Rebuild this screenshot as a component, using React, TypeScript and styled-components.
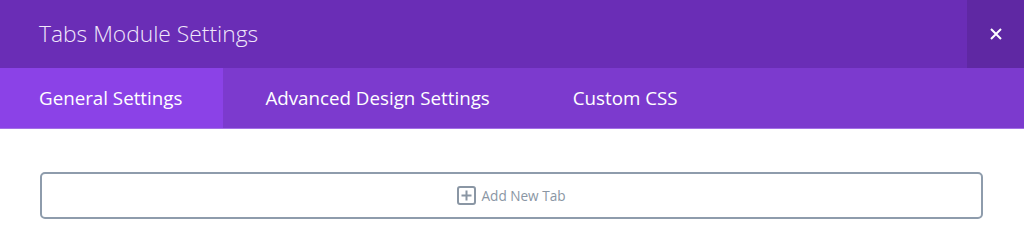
import styled, { createGlobalStyle } from 'styled-components';

const GlobalStyle = createGlobalStyle`
    html, body {
        margin: 0;
        padding: 0;
        background: #ffffff;
        font-family: 'Open Sans', 'Liberation Sans', sans-serif;
    }
`;

const Modal = styled.div`
    width: 1024px;
    height: 241px;
    display: flex;
    flex-direction: column;
    background: #ffffff;
`;

const Header = styled.div`
    height: 68px;
    display: flex;
    align-items: stretch;
    background: #6a2db6;
`;

const Title = styled.h1`
    flex: 1;
    margin: 0;
    padding-left: 39px;
    display: flex;
    align-items: center;
    font-size: 22.8px;
    font-weight: 300;
    color: #f0e8fb;
    padding-bottom: 1px;
`;

const CloseButton = styled.button`
    width: 57px;
    border: none;
    background: #5f28a3;
    color: #ffffff;
    display: flex;
    align-items: center;
    justify-content: center;
    cursor: pointer;
    padding: 0;
`;

const TabBar = styled.div`
    height: 60px;
    display: flex;
    background: #7c3ace;
    border-bottom: 1px solid #a370e6;
`;

const Tab = styled.div<{ $active?: boolean }>`
    display: flex;
    align-items: center;
    padding: 0 41px 2px 39px;
    font-size: 18.75px;
    font-weight: 400;
    color: #ffffff;
    background: ${({ $active }) => ($active ? '#8b42e7' : 'transparent')};
    cursor: pointer;
    & + & {
        padding-left: 42px;
    }
`;

const Body = styled.div`
    padding: 43px 41px 0 40px;
`;

const AddButton = styled.div`
    height: 43px;
    border: 2px solid #8e9cac;
    border-radius: 5px;
    display: flex;
    align-items: center;
    justify-content: center;
    gap: 5px;
    color: #8a96a4;
    font-size: 13.6px;
    cursor: pointer;
`;

const PlusIcon = () => (
    <svg width="19" height="19" viewBox="0 0 19 19">
        <rect x="1" y="1" width="17" height="17" rx="2" fill="none" stroke="#8a96a4" strokeWidth="2" />
        <path d="M9.5 4.5v10M4.5 9.5h10" stroke="#8a96a4" strokeWidth="2" />
    </svg>
);

const CloseIcon = () => (
    <svg width="12" height="12" viewBox="0 0 12 12">
        <path d="M1 1l10 10M11 1l-10 10" stroke="#ffffff" strokeWidth="2" />
    </svg>
);

export default function App() {
    return (
        <>
            <GlobalStyle />
            <Modal>
                <Header>
                    <Title>Tabs Module Settings</Title>
                    <CloseButton aria-label="Close">
                        <CloseIcon />
                    </CloseButton>
                </Header>
                <TabBar>
                    <Tab $active>General Settings</Tab>
                    <Tab>Advanced Design Settings</Tab>
                    <Tab>Custom CSS</Tab>
                </TabBar>
                <Body>
                    <AddButton>
                        <PlusIcon />
                        Add New Tab
                    </AddButton>
                </Body>
            </Modal>
        </>
    );
}
